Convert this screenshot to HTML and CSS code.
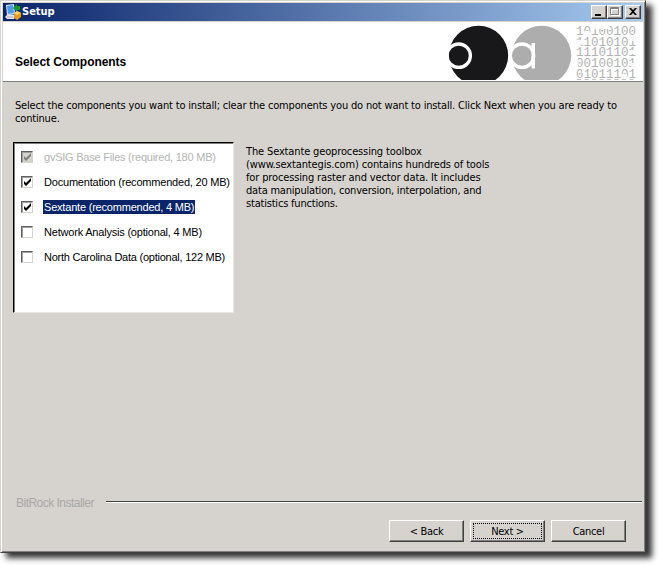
FILE: index.html
```html
<!DOCTYPE html>
<html lang="en">
<head>
<meta charset="utf-8">
<title>Setup</title>
<link rel="stylesheet" href="styles.css">
</head>
<body>
<main class="window">
  <header class="titlebar">
    <svg class="app-icon" width="16" height="16" viewBox="0 0 16 16">
      <path d="M1 1L9 0L10 10L2 11Z" fill="#d8e8f8"/>
      <path d="M2 2L8 1L9 9L3 10Z" fill="#4c9be8"/>
      <path d="M0 13L3 10L10 11L9 15L2 15Z" fill="#e4e4ea"/>
      <path d="M2 13L8 13" stroke="#aab" fill="none"/>
      <path d="M8 4L12 0V2H15V6H12V8Z" fill="#159b24"/>
      <path d="M9 9L12 7L16 9V13L12 16L9 14Z" fill="#e59a20"/>
      <path d="M9 9L12 11L16 9L12 7Z" fill="#ffd066"/>
    </svg>
    <h1 class="title">Setup</h1>
    <div class="controls">
      <span class="control"><svg width="12" height="10"><path d="M2 7h6v2H2z"/></svg></span>
      <span class="control"><svg width="12" height="10"><path d="M2.500 1.500h8v7h-8zM2 2.500h9" fill="none" stroke="#fff"/><path d="M1.500 .5h8v7h-8zM1 1.500h9" fill="none" stroke="#808080"/></svg></span>
      <span class="control close"><svg width="12" height="10"><path d="M2 1h2l2 2 2-2h2L7 4.500 10 8H8L6 6 4 8H2l3-3.500z"/></svg></span>
    </div>
  </header>
  <section class="banner">
    <h2 class="heading">Select Components</h2>
    <svg class="logo" width="195" height="58" viewBox="448 22 195 58">
      <circle cx="478.500" cy="55.500" r="29.700" fill="#18181a"/>
      <circle cx="458.700" cy="55.700" r="11.700" fill="none" stroke="#fff" stroke-width="3.300"/>
      <circle cx="541.500" cy="55.500" r="29.700" fill="#adadad"/>
      <circle cx="522" cy="55.700" r="11.700" fill="none" stroke="#fff" stroke-width="3.300"/>
      <path d="M531.500 43h3.500v25.500h-3.500z" fill="#fff"/>
      <g class="binary">
        <text x="576" y="35">10100100</text>
        <text x="576" y="45.700">11010101</text>
        <text x="576" y="56.400">11101101</text>
        <text x="576" y="67.100">00100101</text>
        <text x="576" y="77.800">01011101</text>
      </g>
      <path d="M577 79.500h59" stroke="#c4c4c4" stroke-dasharray="4 3.500"/>
      <path d="M584 31h6v5h-6zM590 25h20v4h-20zM575 40h6v6h-6zM629 36h8v5h-8zM631 50h6v4h-6zM575 58h3v10h-3zM631 63h7v6h-7zM582 69h3v4h-3zM621 74h6v5h-6z" fill="#fff" opacity=".85"/>
    </svg>
  </section>
  <section class="content">
    <p class="intro"><span class="i1">Select the components you want to install; clear the components you do not want to install. Click Next when you are ready to</span><br><span class="i2">continue.</span></p>
    <div class="columns">
      <ul class="list">
        <li class="row disabled"><span class="box"><svg width="9" height="9"><path d="M1 3v3l2 2 5-5V0L3 5z"/></svg></span><span class="label l1">gvSIG Base Files (required, 180 MB)</span></li>
        <li class="row"><span class="box"><svg width="9" height="9"><path d="M1 3v3l2 2 5-5V0L3 5z"/></svg></span><span class="label l2">Documentation (recommended, 20 MB)</span></li>
        <li class="row selected"><span class="box"><svg width="9" height="9"><path d="M1 3v3l2 2 5-5V0L3 5z"/></svg></span><span class="label l3">Sextante (recommended, 4 MB)</span></li>
        <li class="row"><span class="box"></span><span class="label l4">Network Analysis (optional, 4 MB)</span></li>
        <li class="row"><span class="box"></span><span class="label l5">North Carolina Data (optional, 122 MB)</span></li>
      </ul>
      <p class="description"><span class="d1">The Sextante geoprocessing toolbox</span><br><span class="d2">(www.sextantegis.com) contains hundreds of tools</span><br><span class="d3">for processing raster and vector data. It includes</span><br><span class="d4">data manipulation, conversion, interpolation, and</span><br><span class="d5">statistics functions.</span></p>
    </div>
  </section>
  <div class="divider"><span class="brand">BitRock Installer</span><span class="rule"></span></div>
  <footer class="actions">
    <button class="button">&lt; Back</button>
    <button class="button focused">Next &gt;</button>
    <button class="button">Cancel</button>
  </footer>
</main>
</body>
</html>
```
FILE: styles.css
```css
* { box-sizing: border-box; }
body {
  margin: 0;
  width: 658px;
  height: 565px;
  overflow: hidden;
  background: #fff;
  color: #000;
  font: 11px/13px "DejaVu Sans Condensed", "DejaVu Sans", sans-serif;
}
h1, h2, p, ul { margin: 0; padding: 0; }
svg { display: block; }
span { white-space: nowrap; }
.window {
  display: flex;
  flex-direction: column;
  width: 646px;
  height: 553px;
  padding: 1px 0 0 1px;
  background: #d6d3ce;
  border: 1px solid;
  border-color: #d6d3ce #404040 #404040 #d6d3ce;
  box-shadow: inset 1px 1px #fff, inset -1px -1px #808080, 6px 5px 6px #333;
}
.titlebar {
  display: flex;
  align-items: center;
  height: 18px;
  margin: 1px 2px 1px 1px;
  padding: 0 2px 0 2px;
  background: linear-gradient(90deg, #0a246a, #a6caf0);
}
.title { margin-left: 1px; color: #fff; font: bold 11px/16px "DejaVu Sans Condensed", sans-serif; }
.controls { display: flex; margin-left: auto; }
.control {
  width: 16px;
  height: 14px;
  padding: 1px;
  background: #d6d3ce;
  border: 1px solid;
  border-color: #fff #404040 #404040 #fff;
  box-shadow: inset -1px -1px #808080;
}
.close { margin-left: 2px; }
.banner {
  display: flex;
  justify-content: space-between;
  height: 60px;
  margin: 0 2px 0 1px;
  background: #fff;
  border-bottom: 1px solid #808080;
}
.heading { padding: 33px 0 0 12px; font: bold 12px/14px "Liberation Sans", sans-serif; letter-spacing: -.05px; }
.binary { fill: #b2b2b2; font: 12.5px "Liberation Mono", monospace; }
.content { flex: 1; padding: 17px 0 0 11px; }
.intro { padding-left: 2px; height: 43px; letter-spacing: -.175px; }
.columns { display: flex; gap: 12px; }
.list {
  flex: none;
  width: 221px;
  height: 171px;
  padding: 1px 0 0 6px;
  list-style: none;
  background: #fff;
  border: 1px solid;
  border-color: #000 #e8e6e2 #e8e6e2 #000;
  box-shadow: inset 1px 1px #808080;
  font: 11px/14px "Liberation Sans", sans-serif;
}
.row { display: flex; align-items: center; height: 25px; letter-spacing: -.2px; }
.box {
  flex: none;
  width: 12px;
  height: 12px;
  margin: 0 10px 0 1px;
  padding: 1px;
  background: #fff;
  border: 1px solid;
  border-color: #606060 #d6d3ce #d6d3ce #606060;
  box-shadow: inset 1px 1px #a0a0a0;
}
.label { height: 14px; padding: 0 1px; }
.l1 { letter-spacing: -.23px; }
.l5 { letter-spacing: -.24px; }
.disabled { color: #b4b4b4; fill: #808080; }
.disabled .box { background: #d6d3ce; }
.selected .label { background: #0a246a; color: #fff; }
.description { padding-top: 3px; letter-spacing: -.14px; }
.d4, .d5 { letter-spacing: -.2px; }
.divider { display: flex; height: 24px; padding-left: 14px; }
.brand { flex: none; width: 90px; color: #a8a8a8; font: 12px/14px "Liberation Sans", sans-serif; letter-spacing: -.52px; }
.rule { width: 536px; height: 2px; margin-top: 5px; background: #404040; border-bottom: 1px solid #fff; }
.actions { display: flex; gap: 6px; height: 32px; padding-left: 387px; }
.button {
  position: relative;
  width: 75px;
  height: 22px;
  padding: 0;
  color: #000;
  font: inherit;
  letter-spacing: -.3px;
  background: #d6d3ce;
  border: 1px solid;
  border-color: #fff #404040 #404040 #fff;
  box-shadow: inset -1px -1px #808080;
}
.focused::after { content: ""; position: absolute; inset: 2px; border: 1px dotted #000; }
```
